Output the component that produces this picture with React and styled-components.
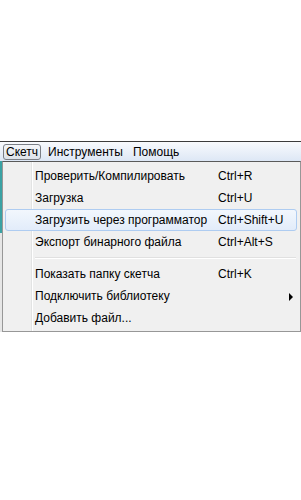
import React from "react";
import styled, { createGlobalStyle } from "styled-components";

const Global = createGlobalStyle`
  body {
    margin: 0;
    background: #ffffff;
    font-family: "Liberation Sans", Arial, sans-serif;
  }
`;

const Screen = styled.div`
  width: 301px;
  height: 500px;
  padding-top: 141px;
  box-sizing: border-box;
`;

const MenuBar = styled.div`
  display: flex;
  align-items: center;
  height: 19px;
  border-top: 1px solid #3c3c3c;
  background: linear-gradient(#f8fafd, #dde7f5);
  font-size: 12px;
  color: #000;
  padding-left: 3px;
  white-space: nowrap;
`;

const BarItem = styled.div`
  height: 16px;
  line-height: 14px;
  padding: 0 2px;
  margin-right: 4px;
  border: 1px solid ${(p) => (p.open ? "#7b7f86" : "transparent")};
  border-radius: 3px;
  background: ${(p) => (p.open ? "linear-gradient(#f4f6f9, #dde3ea)" : "none")};
  box-sizing: border-box;
`;

const Body = styled.div`
  display: flex;
  background: linear-gradient(#3aa2a4 0, #3aa2a4 72px, #e6e6e6 72px);
`;

const Drop = styled.div`
  flex: 1;
  margin-left: 2px;
  border: 1px solid #979797;
  border-top: 1px solid #5a5a5a;
  background: #f0f0f0;
  padding: 3px 3px 2px 2px;
  font-size: 12px;
  color: #000;
  white-space: nowrap;
  background-image: linear-gradient(
    to right,
    transparent 28px,
    #e2e3e3 28px,
    #e2e3e3 29px,
    #ffffff 29px,
    #ffffff 30px,
    transparent 30px
  );
`;

const Item = styled.div`
  position: relative;
  display: grid;
  grid-template-columns: 183px 1fr;
  align-items: center;
  height: 22px;
  padding-left: 29px;
  border: 1px solid ${(p) => (p.active ? "#aeccf1" : "transparent")};
  border-radius: 3px;
  background: ${(p) => (p.active ? "linear-gradient(#f2f7fd, #e2ecfa)" : "none")};
  box-sizing: border-box;
`;

const Shortcut = styled.span``;

const Arrow = styled.span`
  position: absolute;
  right: 3px;
  top: 7px;
  width: 0;
  height: 0;
  border-top: 4px solid transparent;
  border-bottom: 4px solid transparent;
  border-left: 4px solid #000;
`;

const Sep = styled.div`
  height: 1px;
  margin: 4px 1px 4px 30px;
  background: #e0e0e0;
  border-bottom: 1px solid #fff;
`;

const items1 = [
  ["Проверить/Компилировать", "Ctrl+R"],
  ["Загрузка", "Ctrl+U"],
  ["Загрузить через программатор", "Ctrl+Shift+U", true],
  ["Экспорт бинарного файла", "Ctrl+Alt+S"],
];

const items2 = [
  ["Показать папку скетча", "Ctrl+K"],
  ["Подключить библиотеку", "", false, true],
  ["Добавить файл...", ""],
];

const row = ([label, key, active, sub]) => (
  <Item key={label} active={active}>
    <span>{label}</span>
    <Shortcut>{key}</Shortcut>
    {sub && <Arrow />}
  </Item>
);

export default function App() {
  return (
    <Screen>
      <Global />
      <MenuBar>
        <BarItem open>Скетч</BarItem>
        <BarItem>Инструменты</BarItem>
        <BarItem>Помощь</BarItem>
      </MenuBar>
      <Body>
        <Drop>
          {items1.map(row)}
          <Sep />
          {items2.map(row)}
        </Drop>
      </Body>
    </Screen>
  );
}
